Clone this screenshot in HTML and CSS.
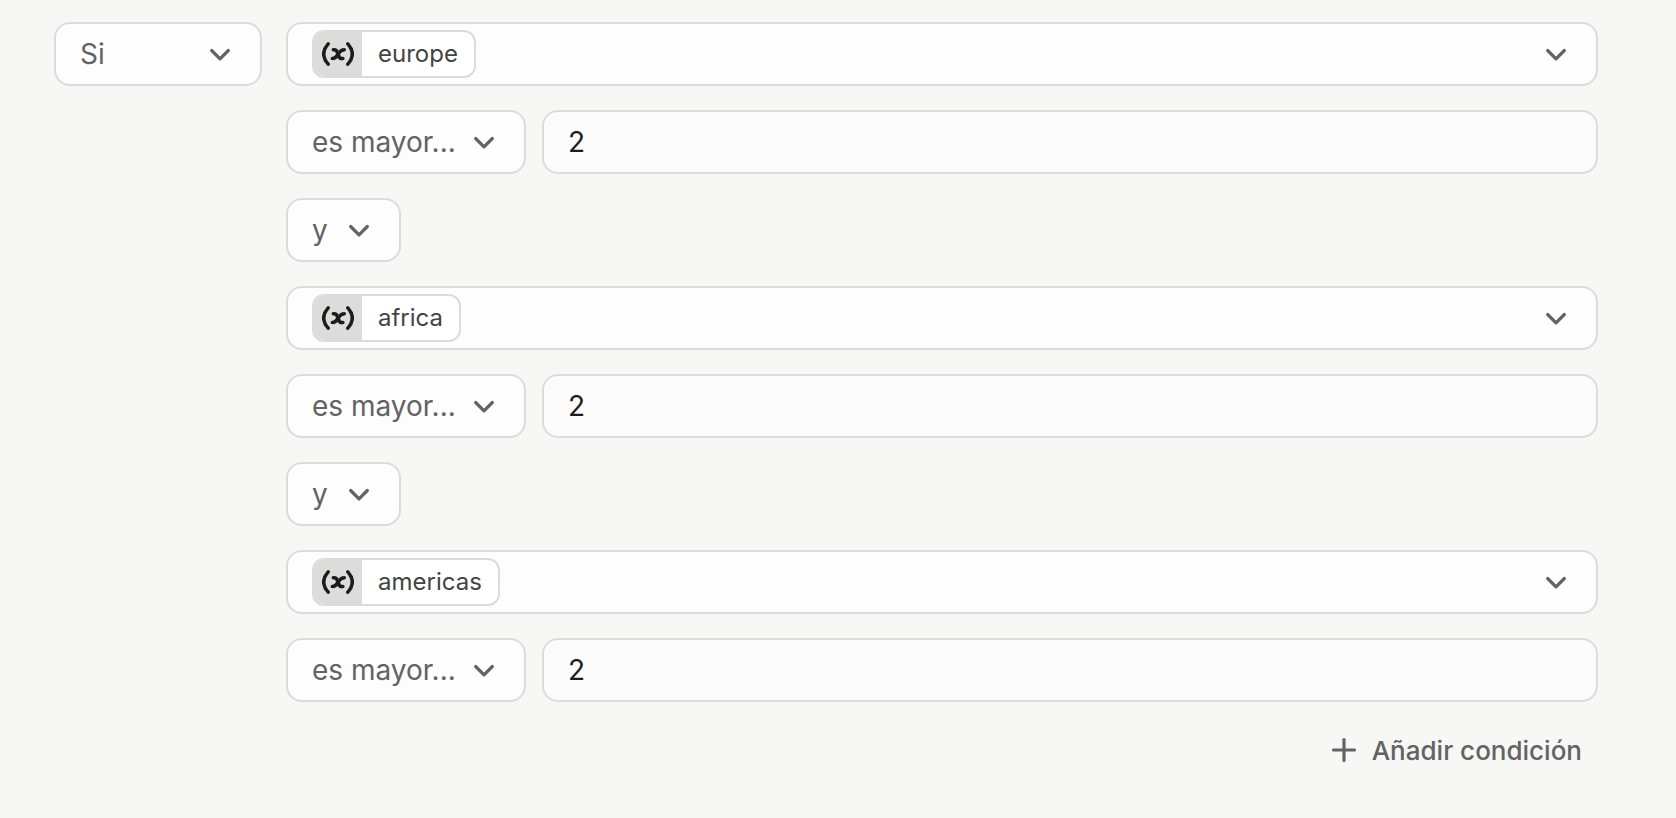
FILE: index.html
```html
<!doctype html>
<html lang="es">

<head>
    <meta charset="utf-8">
    <title>Condición</title>
    <link rel="stylesheet" href="styles.css">
</head>

<body>
    <svg class="sprite" aria-hidden="true">
        <symbol id="chevron" viewBox="0 0 32 32">
            <path d="M7.700 12.500l8.300 8.300 8.300-8.300" />
        </symbol>
        <symbol id="plus" viewBox="0 0 32 32">
            <path d="M16 5.500v21M5.500 16h21" />
        </symbol>
        <symbol id="variable" viewBox="0 0 32 32">
            <path d="M6.200 5.800C.300 12.500.300 19.500 6.200 26.200M25.800 5.800c5.900 6.700 5.900 13.700 0 20.400" />
            <path d="M11.300 11.700h1c1.400 0 2.100.600 2.600 1.800l2.200 5.200c.500 1.200 1.200 1.800 2.600 1.800h1.200M22.300 11.700c-2.300 0-3.400.800-4.700 2.500l-2.700 3.700c-1.300 1.800-2.400 2.600-4.600 2.600" />
        </symbol>
    </svg>

    <form class="condition">
        <div class="select selectIf">
            <select aria-label="Si">
                <option>Si</option>
            </select>
            <svg class="icon"><use href="#chevron" /></svg>
        </div>

        <div class="rules">
            <button type="button" class="variablePicker" aria-haspopup="listbox">
                <span class="chip">
                    <span class="chipIcon"><svg class="icon"><use href="#variable" /></svg></span>
                    <span class="chipName">europe</span>
                </span>
                <svg class="icon"><use href="#chevron" /></svg>
            </button>
            <div class="comparison">
                <div class="select selectOperator">
                    <select aria-label="Operador">
                        <option>es mayor...</option>
                    </select>
                    <svg class="icon"><use href="#chevron" /></svg>
                </div>
                <input class="value" type="text" value="2" aria-label="Valor">
            </div>

            <div class="select selectJoin">
                <select aria-label="Unión">
                    <option>y</option>
                </select>
                <svg class="icon"><use href="#chevron" /></svg>
            </div>

            <button type="button" class="variablePicker" aria-haspopup="listbox">
                <span class="chip">
                    <span class="chipIcon"><svg class="icon"><use href="#variable" /></svg></span>
                    <span class="chipName">africa</span>
                </span>
                <svg class="icon"><use href="#chevron" /></svg>
            </button>
            <div class="comparison">
                <div class="select selectOperator">
                    <select aria-label="Operador">
                        <option>es mayor...</option>
                    </select>
                    <svg class="icon"><use href="#chevron" /></svg>
                </div>
                <input class="value" type="text" value="2" aria-label="Valor">
            </div>

            <div class="select selectJoin">
                <select aria-label="Unión">
                    <option>y</option>
                </select>
                <svg class="icon"><use href="#chevron" /></svg>
            </div>

            <button type="button" class="variablePicker" aria-haspopup="listbox">
                <span class="chip">
                    <span class="chipIcon"><svg class="icon"><use href="#variable" /></svg></span>
                    <span class="chipName">americas</span>
                </span>
                <svg class="icon"><use href="#chevron" /></svg>
            </button>
            <div class="comparison">
                <div class="select selectOperator">
                    <select aria-label="Operador">
                        <option>es mayor...</option>
                    </select>
                    <svg class="icon"><use href="#chevron" /></svg>
                </div>
                <input class="value" type="text" value="2" aria-label="Valor">
            </div>

            <button type="button" class="addButton">
                <svg class="icon"><use href="#plus" /></svg>
                Añadir condición
            </button>
        </div>
    </form>
</body>

</html>
```

FILE: styles.css
```css
* {
    margin: 0;
    padding: 0;
    box-sizing: border-box;
}

body {
    font-family: Inter, "Liberation Sans", sans-serif;
    font-size: 28px;
    color: #636363;
    background-color: #f7f7f5;
}

button,
input,
select {
    font: inherit;
    color: inherit;
}

.sprite {
    display: none;
}

.icon {
    width: 32px;
    height: 32px;
    flex-shrink: 0;
    fill: none;
    stroke: currentColor;
    stroke-width: 3.2;
    stroke-linecap: round;
    stroke-linejoin: round;
}

.condition {
    display: flex;
    align-items: flex-start;
    gap: 24px;
    padding: 22px 78px 44px 54px;
}

.rules {
    flex: 1;
    min-width: 0;
    display: flex;
    flex-direction: column;
    align-items: flex-start;
    gap: 24px;
}

/* the arrow shares the grid cell with the select */
.select {
    display: grid;
    align-items: center;
}

.select select,
.select .icon {
    grid-area: 1 / 1;
}

.select .icon {
    justify-self: end;
    margin-right: 26px;
    pointer-events: none;
}

.select select {
    appearance: none;
    width: 100%;
    height: 64px;
    padding: 0 71px 0 24px;
    border: solid 2px #dcdcdb;
    border-radius: 16px;
    background-color: #fdfdfd;
}

.selectIf {
    width: 208px;
}

.selectOperator {
    width: 240px;
}

.selectOperator select {
    padding-right: 60px;
}

.comparison {
    width: 100%;
    display: flex;
    gap: 16px;
}

.value {
    flex: 1;
    min-width: 0;
    height: 64px;
    padding: 0 24px;
    border: solid 2px #dcdcdb;
    border-radius: 16px;
    background-color: #fbfbfb;
    color: #1c1c1c;
}

.variablePicker {
    width: 100%;
    height: 64px;
    padding: 0 24px;
    display: flex;
    justify-content: space-between;
    align-items: center;
    border: solid 2px #dcdcdb;
    border-radius: 16px;
    background-color: #fdfdfd;
}

.chip {
    height: 48px;
    display: flex;
    border: solid 2px #dcdcdb;
    border-radius: 12px;
    background-color: white;
    overflow: hidden;
}

.chipIcon {
    padding: 0 8px;
    display: flex;
    align-items: center;
    background-color: #dcdcdb;
    color: #1c1c1c;
}

.chipIcon .icon {
    stroke-width: 3.5;
}

.chipName {
    padding: 0 16px;
    font-size: 24px;
    line-height: 44px;
    color: #444444;
}

.addButton {
    align-self: flex-end;
    height: 48px;
    padding: 0 16px;
    display: flex;
    align-items: center;
    gap: 12px;
    border: none;
    background: none;
    font-size: 26px;
    font-weight: 500;
}
```
